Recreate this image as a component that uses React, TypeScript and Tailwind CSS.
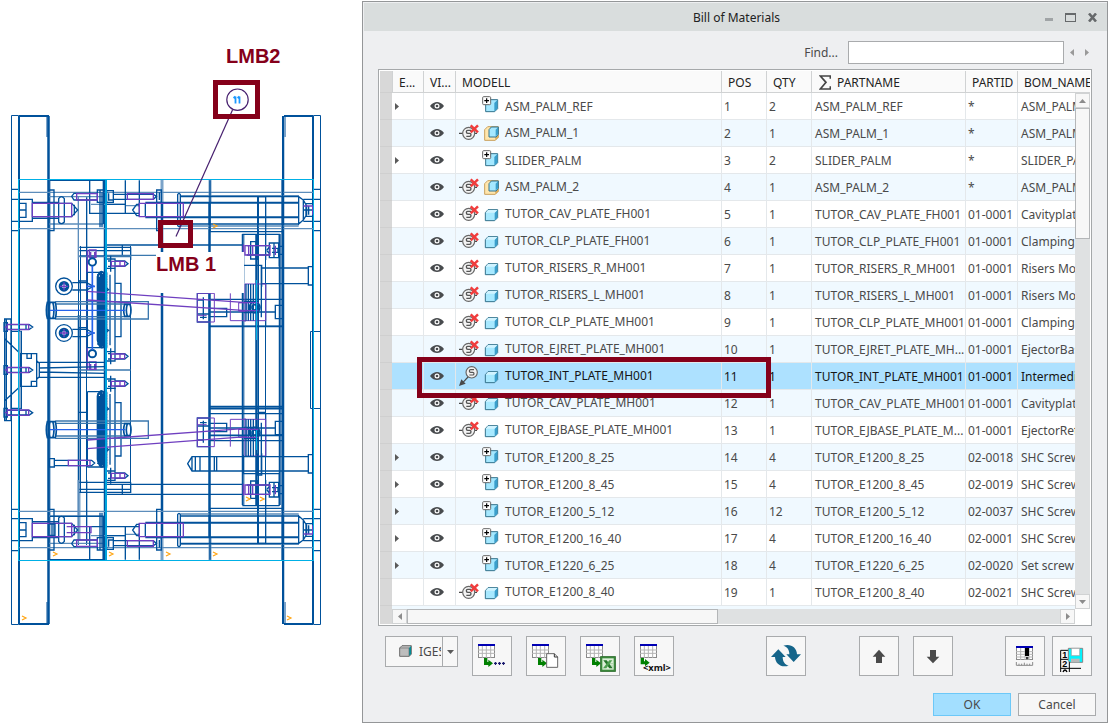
import type { ReactNode } from "react";

type Kind = "group" | "asm" | "part" | "active";
type Row = { kind: Kind; model: string; pos: number; qty: number; part: string; id: string; bom: string };

const rows: Row[] = [
  { kind: "group", model: "ASM_PALM_REF", pos: 1, qty: 2, part: "ASM_PALM_REF", id: "*", bom: "ASM_PALM_REF" },
  { kind: "asm", model: "ASM_PALM_1", pos: 2, qty: 1, part: "ASM_PALM_1", id: "*", bom: "ASM_PALM_1" },
  { kind: "group", model: "SLIDER_PALM", pos: 3, qty: 2, part: "SLIDER_PALM", id: "*", bom: "SLIDER_PALM" },
  { kind: "asm", model: "ASM_PALM_2", pos: 4, qty: 1, part: "ASM_PALM_2", id: "*", bom: "ASM_PALM_2" },
  { kind: "part", model: "TUTOR_CAV_PLATE_FH001", pos: 5, qty: 1, part: "TUTOR_CAV_PLATE_FH001", id: "01-0001", bom: "Cavityplate" },
  { kind: "part", model: "TUTOR_CLP_PLATE_FH001", pos: 6, qty: 1, part: "TUTOR_CLP_PLATE_FH001", id: "01-0001", bom: "Clampingplate" },
  { kind: "part", model: "TUTOR_RISERS_R_MH001", pos: 7, qty: 1, part: "TUTOR_RISERS_R_MH001", id: "01-0001", bom: "Risers Moving" },
  { kind: "part", model: "TUTOR_RISERS_L_MH001", pos: 8, qty: 1, part: "TUTOR_RISERS_L_MH001", id: "01-0001", bom: "Risers Moving" },
  { kind: "part", model: "TUTOR_CLP_PLATE_MH001", pos: 9, qty: 1, part: "TUTOR_CLP_PLATE_MH001", id: "01-0001", bom: "Clampingplate" },
  { kind: "part", model: "TUTOR_EJRET_PLATE_MH001", pos: 10, qty: 1, part: "TUTOR_EJRET_PLATE_MH...", id: "01-0001", bom: "EjectorBase" },
  { kind: "active", model: "TUTOR_INT_PLATE_MH001", pos: 11, qty: 1, part: "TUTOR_INT_PLATE_MH001", id: "01-0001", bom: "Intermediate" },
  { kind: "part", model: "TUTOR_CAV_PLATE_MH001", pos: 12, qty: 1, part: "TUTOR_CAV_PLATE_MH001", id: "01-0001", bom: "Cavityplate" },
  { kind: "part", model: "TUTOR_EJBASE_PLATE_MH001", pos: 13, qty: 1, part: "TUTOR_EJBASE_PLATE_M...", id: "01-0001", bom: "EjectorRet" },
  { kind: "group", model: "TUTOR_E1200_8_25", pos: 14, qty: 4, part: "TUTOR_E1200_8_25", id: "02-0018", bom: "SHC Screw" },
  { kind: "group", model: "TUTOR_E1200_8_45", pos: 15, qty: 4, part: "TUTOR_E1200_8_45", id: "02-0019", bom: "SHC Screw" },
  { kind: "group", model: "TUTOR_E1200_5_12", pos: 16, qty: 12, part: "TUTOR_E1200_5_12", id: "02-0037", bom: "SHC Screw" },
  { kind: "group", model: "TUTOR_E1200_16_40", pos: 17, qty: 4, part: "TUTOR_E1200_16_40", id: "02-0001", bom: "SHC Screw" },
  { kind: "group", model: "TUTOR_E1220_6_25", pos: 18, qty: 4, part: "TUTOR_E1220_6_25", id: "02-0020", bom: "Set screw" },
  { kind: "part", model: "TUTOR_E1200_8_40", pos: 19, qty: 1, part: "TUTOR_E1200_8_40", id: "02-0021", bom: "SHC Screw" },
];

function EyeIcon() {
  return (
    <svg viewBox="0 0 42 24" className="block h-2 w-3.5" aria-hidden="true">
      <path d="M0 12C7 3 14 0 21 0s14 3 21 12c-7 9-14 12-21 12S7 21 0 12Z" fill="#484b4e" />
      <circle cx="21" cy="12" r="7.5" fill="#fff" />
      <circle cx="21" cy="12" r="4" fill="#484b4e" />
    </svg>
  );
}

function BalloonIcon({ active }: { active: boolean }) {
  return (
    <svg viewBox="0 0 60 60" className="block size-5" aria-hidden="true">
      {active ? (
        <>
          <path d="M30 30L12 49" stroke="#4a4a4a" strokeWidth="3.5" />
          <path d="M0 60L7 40L20 53Z" fill="#4a4a4a" />
          <circle cx="38" cy="19" r="17" fill="#f2f2f2" stroke="#666" strokeWidth="3.5" />
          <path d="M45 11H35q-4 0-4 4t4 4h6q4 0 4 4t-4 4H31" fill="none" stroke="#555" strokeWidth="3.5" />
        </>
      ) : (
        <>
          <path d="M0 31H12M46 31H54" stroke="#4a4a4a" strokeWidth="3.5" />
          <circle cx="29" cy="31" r="18" fill="#f4f4f4" stroke="#686868" strokeWidth="3.5" />
          <path d="M36 22H26q-4 0-4 4.500t4 4.500h6q4 0 4 4.500t-4 4.500H22" fill="none" stroke="#555" strokeWidth="4" />
          <path d="M35 7L57 28M57 7L35 28" stroke="#f03c3c" strokeWidth="7.500" />
        </>
      )}
    </svg>
  );
}

function ModelIcon({ kind }: { kind: Kind }) {
  if (kind === "group")
    return (
      <svg viewBox="0 0 51 51" className="block size-[17px]" aria-hidden="true">
        <path d="M11 21L19 11H47V38L38 47H11Z" fill="#a5e8ff" stroke="#34728c" strokeWidth="3" />
        <path d="M37 21L46 12V38L37 46Z" fill="#3a9fcc" />
        <rect x="2" y="2" width="24" height="24" rx="3" fill="#fff" stroke="#666" strokeWidth="3" />
        <path d="M7 14H21M14 7V21" stroke="#000" strokeWidth="3.5" />
      </svg>
    );
  if (kind === "asm")
    return (
      <svg viewBox="0 0 45 45" className="block size-[15px]" aria-hidden="true">
        <path d="M2 11L11 2H43V34L34 43H2Z" fill="#ffe6ad" stroke="#c9a15c" strokeWidth="3" />
        <path d="M34 34L43 25V34L34 43Z" fill="#d9ab5c" />
        <path d="M15 11L22 3H43V25L36 33H15Z" fill="#a5e8ff" stroke="#34728c" strokeWidth="3" />
        <path d="M35 11L42 4V25L35 31Z" fill="#3a9fcc" />
      </svg>
    );
  return (
    <svg viewBox="0 0 45 45" className="block size-[15px]" aria-hidden="true">
      <path d="M4 17L12 8H41V32L32 41H4Z" fill="#a8e9ff" stroke="#34728c" strokeWidth="3" />
      <path d="M32 17L40 9V32L32 40Z" fill="#3a9fcc" />
      <path d="M5 17L12 9H40L32 17Z" fill="#d0f3ff" />
    </svg>
  );
}

function Triangle({ dir, className }: { dir: "left" | "right" | "up" | "down"; className: string }) {
  const d = { left: "M10 0V10L0 5Z", right: "M0 0V10L10 5Z", up: "M0 10H10L5 0Z", down: "M0 0H10L5 10Z" }[dir];
  return (
    <svg viewBox="0 0 10 10" preserveAspectRatio="none" className={className} aria-hidden="true">
      <path d={d} fill="currentColor" />
    </svg>
  );
}

const screws: [number, number][] = [[320, 71], [320, 349], [320, 431], [320, 707]];
const marks: [number, number][] = [[214, 226], [247, 499], [261, 499], [54, 554], [110, 554], [167, 554], [214, 554], [23, 618], [288, 618]];

/* Half of the mould near one clamp edge, in thirds of a unit. */
function UpperFixings() {
  return (
    <g>
      <g stroke="#5c8dbb">
        <path d="M56 457H940M56 566H940M148 470H310M148 552H310M541 467H896M541 558H896" />
        <path d="M235 470V660M273 493H376M376 497H420" />
      </g>
      <path d="M33 448H56M33 478H56M33 544H56M33 572H56M941 448H962M941 478H962M941 544H962M941 572H962" />
      <path d="M58 478H97V544H58ZM58 490H78V532H58M58 510H78" strokeWidth="4" />
      <path d="M97 490H215L233 510L215 530H97M97 487H176M97 535H176M223 494V526" />
      <path d="M148 450H162V572H148M176 476Q184 464 193 476V546Q184 556 176 546Z" strokeWidth="4" />
      <path d="M260 472V660M269 421V520H376M376 421V520M418 421V500M418 520H376M320 493H376" />
      <path d="M215 469L222 460H292V480H222ZM292 450H312V487H292ZM300 450V562M306 457V562M320 452H340V487H320ZM326 460V480H340M340 463H460L470 469L460 478H340M470 450H484V487H470ZM478 457V480" strokeWidth="4" />
      <path d="M398 510L410 493H418V527H410ZM418 490V530M436 490V530" />
      <path d="M436 488H896M436 532H896" strokeWidth="6" />
      <path d="M533 464Q537 456 541 464V556Q537 564 533 556ZM541 470H896M541 552H896M470 487V572H484" />
      <path d="M896 470V552L910 540V480ZM910 480L920 498V524L910 540M910 478H940V544H910M918 491H940V529H918ZM926 498V524M912 510H940" strokeWidth="4" />
      <path d="M150 421H310V552M630 421V575H848V421M773 660V470H797V660" strokeWidth="4" />
      <g stroke="#6f3fc0" strokeWidth="4">
        <path d="M97 490H215V530H97ZM230 461H292V480H230ZM382 461H460V478H382ZM418 490H550V530H418ZM910 498H938V524" />
      </g>
    </g>
  );
}

/* Ejector screws at the right-hand plate stack. */
function StackScrews({ y }: { y: number }) {
  return (
    <g transform={`translate(0 ${y})`} strokeWidth="4">
      <path d="M727 -48H838V48M752 -26H768V26H752ZM740 -14H808V14H740M808 -22H836V22H808ZM822 -22V22M836 -12H848V12H836M800 0L808 -10M800 0L808 10M816 -6H834V6H816" />
      <path d="M730 -18V18M735 -14H810V14H735ZM746 -14V14M758 -14V14M826 -14V14" stroke="#6f3fc0" />
    </g>
  );
}

function GuideBush({ y }: { y: number }) {
  return (
    <g transform={`translate(0 ${y})`}>
      <path d="M166 -19H392M166 19H392M392 -26H445V26H345V-26ZM166 -26H345M166 26H345" stroke="#3b78ae" />
      <path d="M142 -24Q136 0 142 24H166Q172 0 166 -24ZM150 -26Q142 0 150 26M158 -26Q166 0 158 26M374 -18Q368 0 374 18H390Q396 0 390 -18ZM382 -18Q376 0 382 18" strokeWidth="5" />
      <path d="M150 0H376" stroke="#2563eb" />
    </g>
  );
}

function CavityInsert({ y }: { y: number }) {
  return (
    <g transform={`translate(0 ${y})`}>
      <path d="M262 -113H320M262 113H320V-113M262 -113V113M345 -80H363V80H345ZM345 -124V124M330 -106V106" strokeWidth="4" />
      <path d="M293 -100Q302 -125 313 -108V108Q300 122 293 90ZM303 -112V112M298 -100V100M308 -108V108" strokeWidth="6" />
      <path d="M296 -108V108M317 -110V110" strokeDasharray="4 4" strokeWidth="9" />
      <path d="M315 -70L326 -61L315 -54M315 54L326 61L315 70" strokeWidth="4" />
    </g>
  );
}

function AnglePinHead({ y, flip }: { y: number; flip: number }) {
  return (
    <g transform={`translate(0 ${y}) scale(1 ${flip})`}>
      <path d="M592 -42H628V44H592ZM610 -30V36M592 -22H610M592 20H628M600 30H620M628 -24H848M628 3H680V28H628M628 57H848M628 14H826M826 -6H848V34H826ZM797 -70V57" strokeWidth="4" />
      <path d="M592 44V-42H643V44ZM691 -42V40H797V-70H735V44M716 -14H740V12H716ZM592 24H620" stroke="#6f3fc0" strokeWidth="3" />
      <path d="M738 -70V40M745 -70V40M752 -70V40M760 -70V40M775 -60V40M784 -126V30M732 -18H775M732 16H775" strokeWidth="4" />
      <circle cx="764" cy="0" r="16" strokeWidth="5" />
      <circle cx="764" cy="0" r="8" strokeWidth="5" />
      <path d="M716 -14H775M716 10H775" stroke="#6f3fc0" />
    </g>
  );
}

function MouldDrawing() {
  return (
    <svg viewBox="0 0 362 640" className="block w-full" role="img" aria-label="Mould assembly with balloon 11">
      <g fill="none" stroke="#00519b">
        {/* plates and clamp frames */}
        <g stroke="#7ba3c9" strokeWidth="3">
          <path d="M47.500 116V137M47.500 602V624M284.500 116V137M284.500 602V624M162 180V202M162 538V560M210 180V202M210 538V560M79 315V540" />
        </g>
        <path d="M49.500 180V560M105 180V560M280 234V505M282 180V560M243.500 234V505" stroke="#5c8dbb" strokeWidth="2" />
        <path d="M11.500 115.500H18.500V624.500H11.500ZM313.500 115.500H320.500V624.500H313.500ZM310.500 331.500H320.500M310.500 331.500V408.500H320.500" />
        <path d="M19 116H49M19 624H49M284 116H313M284 624H313M19 116V624M313 116V624M283 116V624" strokeWidth="2" />
        <path d="M48.500 116V624M162 202V538M209.500 202V538M256.500 234V505" strokeWidth="2.500" />
        <path d="M242.500 234V505M104.500 180V560M279.500 234V505M283.500 137V602" strokeWidth="1.500" />
        <path d="M78.500 200V545M86.500 198V545M265.500 196V543M258.500 196V543M130.500 246V492M80.500 246V492" />

        <g transform="translate(0 40) scale(.33333)" strokeWidth="4">
          <UpperFixings />
          <StackScrews y={631} />
          <path d="M320 615H727M238 622H392M238 632H392M238 648H392M367 615V648M392 622V660" />
        </g>

        <g transform="translate(0 240) scale(.33333)" strokeWidth="4">
          <path d="M320 46H728M238 50H392M238 390H392" stroke="#3b78ae" />
          <path d="M785 84H925M785 131H925M732 76H785V140M925 80H940V135H925ZM730 84V131" strokeWidth="4" />
          <path d="M262 30V390M268 30H288V52H268ZM268 366H288V388H268ZM272 36V50M284 36V50M272 372V388M284 372V388" stroke="#6f3fc0" strokeWidth="4" />
          <CavityInsert y={210} />
          <CavityInsert y={568} />
          <GuideBush y={211} />
          <GuideBush y={569} />
          {[139, 279].map((y) => (
            <g key={y}>
              <circle cx="192" cy={y} r="25" strokeWidth="4" />
              <circle cx="192" cy={y} r="11" strokeWidth="10" />
              <path d={`M180 ${y}H204M192 ${y - 12}V${y + 12}`} stroke="#6f3fc0" />
              <path d={`M217 ${y - 11}H260L280 ${y}L260 ${y + 11}H217M236 ${y - 19}V${y + 19}M260 ${y - 16}H236`} strokeWidth="4" />
            </g>
          ))}
          {[66, 341].map((y) => (
            <circle key={y} cx="277" cy={y} r="11" strokeWidth="6" />
          ))}
          <path d="M277 78V330M260 139H285M260 279H285" stroke="#2563eb" strokeWidth="5" />
          {screws.map(([x, y]) => (
            <g key={y} transform={`translate(${x} ${y})`} strokeWidth="4">
              <path d="M0 -14H25V14H0M4 -8H12V8H4M12 -24V24M25 -8H54L64 0L54 8H25" />
              <path d="M14 -7H54V7H14ZM40 -7V7" stroke="#6f3fc0" />
            </g>
          ))}
          {/* locating ring and sprue bush */}
          <path d="M14 237H33V542H14ZM19 237V542M33 274H64V505H33M14 296L62 342M14 482L62 438" strokeWidth="4" />
          <path d="M59 274V505" stroke="#7ba3c9" strokeWidth="6" />
          <path d="M62 341H110V439H62ZM81 341V355H94V341M94 439V424H108M110 362L118 370V410L110 418M118 367H315M118 412H315M118 384L315 380M118 396L315 400" strokeWidth="4" />
          {[261, 390, 518].map((y) => (
            <g key={y} strokeWidth="4">
              <path d={`M12 ${y - 13}H22V${y + 13}H12ZM22 ${y - 7}H88L98 ${y}L88 ${y + 7}H22M78 ${y - 7}V${y + 7}`} />
              <path d={`M22 ${y - 8}H86V${y + 8}H22ZM14 ${y}H22`} stroke="#6f3fc0" />
            </g>
          ))}
          <AnglePinHead y={202} flip={1} />
          <AnglePinHead y={578} flip={-1} />
          <path d="M262 154L740 188M262 180L740 212M262 600L740 565M262 626L740 590" stroke="#6f3fc0" />
          <path d="M630 500H848M630 259H848M628 506H848M630 586H848" strokeWidth="5" />
          <path d="M235 517H260M775 517H797" />
        </g>

        <g transform="translate(0 430) scale(.33333)" strokeWidth="4">
          <g transform="translate(0 810) scale(1 -1)">
            <UpperFixings />
          </g>
          <StackScrews y={179} />
          <path d="M727 227H838M320 163H727M320 193H727M238 157H392M238 178H392M238 187H392V157M367 163V193" strokeWidth="4" />
          <path d="M563 101L576 80H600V123H576ZM576 80V123M586 80V123M600 80H925M600 123H925M643 80V123M650 80V123M925 74H940V129H925ZM773 70V135H785V70M730 74V131" strokeWidth="4" />
          <path d="M148 86H163V111H148ZM163 91H275L284 99L275 107H163" strokeWidth="4" />
          <path d="M205 91H270V107H205ZM200 290H273V308H200" stroke="#6f3fc0" strokeWidth="4" />
          <path d="M150 259H310V388M148 282H165V316H148M156 282V316" strokeWidth="4" />
        </g>

        <rect x="156" y="252" width="88" height="41" fill="#fff" stroke="none" />
        <path d="M18 179.500H314M18 560.500H314M18.500 180V560M313.500 180V560" stroke="#00b0e6" />
        <path d="M106 180V560" stroke="#00a4dd" strokeWidth="2" />
        <path d="M256.500 280V340M256.500 430V450" stroke="#00b0e6" />
        <g stroke="#ffa514" strokeWidth="1.200">
          {marks.map(([x, y]) => (
            <path key={`${x}-${y}`} d={`M${x - 1} ${y - 2}L${x + 3} ${y}L${x - 1} ${y + 2}`} />
          ))}
        </g>
      </g>

      <g fill="none">
        <path d="M232.500 110L176 236.500" stroke="#47206f" strokeWidth="1.200" />
        <circle cx="237.500" cy="99.700" r="10.700" stroke="#47206f" strokeWidth="1.200" />
        <path d="M235.500 96.500V103.500M239.500 96.500V103.500M233.500 98L235.500 96.500M237.500 98L239.500 96.500" stroke="#1a98ff" strokeWidth="1.800" />
        <rect x="215.500" y="82.500" width="42" height="34" stroke="#85001a" strokeWidth="5" />
        <rect x="160.500" y="222.500" width="30" height="23" stroke="#85001a" strokeWidth="5" />
      </g>
      <g fill="#85001a" className="font-['Liberation_Sans',sans-serif] text-[20px] font-bold">
        <text x="226" y="63">LMB2</text>
        <text x="156" y="271">LMB 1</text>
      </g>
    </svg>
  );
}

function ToolButton({ label, children, className = "" }: { label: string; children: ReactNode; className?: string }) {
  return (
    <button type="button" aria-label={label} className={`size-10 shrink-0 border border-[#a9abad] bg-[#f7f7f7] ${className}`}>
      <svg viewBox="3 3 114 114" className="block size-full" aria-hidden="true">
        {children}
      </svg>
    </button>
  );
}

function Sheet() {
  return (
    <g>
      <rect x="19.500" y="25.500" width="48" height="39" fill="#fff" stroke="#8a8a8a" strokeWidth="3" />
      <path d="M18 42H69M18 52H69M31 30V66M43 30V66M56 30V66" stroke="#b4b4b4" strokeWidth="3" />
      <path d="M18 24H69V30H18Z" fill="#0000b4" />
    </g>
  );
}

function ExportArrow() {
  return <path d="M36 66H46V78H49V71L63 82L49 93V87H36Z" fill="#008000" />;
}

const smallButton = "flex items-center justify-center border border-[#d0d2d3] bg-[#f7f7f7] text-[#8c8c8c]";
const th = "overflow-hidden border-b border-l border-[#d0d2d3] p-0 pt-0.5 pl-1.5 text-left font-normal whitespace-nowrap";
const td = "overflow-hidden border-b border-l border-[#e4e8eb] p-0 whitespace-nowrap";

function BomTable() {
  return (
    <div className="mx-[15px] mt-[5px] border border-[#a5a8aa] bg-white p-px">
      <div className="relative h-[538px] overflow-hidden">
        <table className="w-full table-fixed border-separate border-spacing-0 text-[12px] leading-4 text-[#4a4a4a]">
          <colgroup>
            <col className="w-3" />
            <col className="w-[31px]" />
            <col className="w-8" />
            <col className="w-[266px]" />
            <col className="w-[45px]" />
            <col className="w-[45px]" />
            <col className="w-[154px]" />
            <col className="w-[52px]" />
            <col />
          </colgroup>
          <thead>
            <tr className="h-[22px] bg-[#fafafa] text-[#222]">
              <th className="border-b border-[#cfcfcf] bg-[#d8d8d8] p-0" aria-label="Row" />
              <th className={th}>E...</th>
              <th className={th}>VI...</th>
              <th className={th}>MODELL</th>
              <th className={th}>POS</th>
              <th className={th}>QTY</th>
              <th className={th}>
                <span className="flex items-center gap-1.5">
                  <svg viewBox="0 0 36 45" className="ml-px h-[15px] w-3" aria-hidden="true">
                    <path d="M34 11V3H4L21 22L4 42H34V34" fill="none" stroke="#444" strokeWidth="5" />
                  </svg>
                  PARTNAME
                </span>
              </th>
              <th className={th}>PARTID</th>
              <th className={th}>BOM_NAME</th>
            </tr>
          </thead>
          <tbody>
            {rows.map((r, i) => (
              <tr
                key={r.pos}
                className={`h-[27px] ${r.kind === "active" ? "bg-[#ade1ff] text-[#151515]" : i % 2 ? "bg-[#f0f9ff]" : "bg-white"}`}
              >
                <td className="border-b border-[#cfcfcf] bg-[#d8d8d8] p-0" />
                <td className="border-b border-[#e4e8eb] p-0 pl-[3px]">
                  {r.kind === "group" && (
                    <button type="button" aria-label={`Expand ${r.model}`} className="block text-[#5a5a5a]">
                      <Triangle dir="right" className="h-[7px] w-1" />
                    </button>
                  )}
                </td>
                <td className="relative border-b border-l border-[#e4e8eb] p-0 pl-1.5">
                  <EyeIcon />
                  {r.kind === "active" && (
                    <span className="pointer-events-none absolute -top-1.5 -left-[7px] z-10 h-[41px] w-[354px] border-[5px] border-[#85001a]" />
                  )}
                </td>
                <td className={td}>
                  <span className="flex items-center">
                    <span className="w-[25px] pl-[3px]">{r.kind !== "group" && <BalloonIcon active={r.kind === "active"} />}</span>
                    <span className="flex w-6 pl-[3px]">
                      <span className={r.kind === "group" ? "-mt-[3px] -ml-0.5" : ""}>
                        <ModelIcon kind={r.kind} />
                      </span>
                    </span>
                    <span className={r.kind === "group" ? "pt-0.5" : ""}>{r.model}</span>
                  </span>
                </td>
                <td className={`${td} pt-0.5 pl-0.5`}>{r.pos}</td>
                <td className={`${td} pt-0.5 pl-0.5`}>{r.qty}</td>
                <td className={`${td} pt-0.5 pl-[3px]`}>{r.part}</td>
                <td className={`${td} pt-0.5 pl-0.5`}>{r.id}</td>
                <td className={`${td} pt-0.5 pl-[3px]`}>{r.bom}</td>
              </tr>
            ))}
            <tr className="h-[27px] bg-[#f0f9ff]">
              <td className="bg-[#d8d8d8] p-0" />
              <td colSpan={8} />
            </tr>
          </tbody>
        </table>
        <div className="absolute top-[22px] right-0 bottom-0 flex w-[15px] flex-col bg-[#dfe1e2]">
          <button type="button" aria-label="Scroll up" className={`${smallButton} h-[15px]`}>
            <Triangle dir="up" className="h-1 w-[7px]" />
          </button>
          <div className="h-[131px] border border-[#b4b6b8] bg-[#f7f7f7]" />
          <button type="button" aria-label="Scroll down" className={`${smallButton} mt-auto h-[15px]`}>
            <Triangle dir="down" className="h-1 w-[7px]" />
          </button>
        </div>
      </div>
      <div className="flex h-[15px] pr-[15px]">
        <div className="w-3 bg-[#d8d8d8]" />
        <div className="flex flex-1 bg-[#dfe1e2]">
          <button type="button" aria-label="Scroll left" className={`${smallButton} w-[15px]`}>
            <Triangle dir="left" className="h-[7px] w-1" />
          </button>
          <div className="w-[311px] border border-[#b4b6b8] bg-[#f7f7f7]" />
          <button type="button" aria-label="Scroll right" className={`${smallButton} ml-auto w-[15px]`}>
            <Triangle dir="right" className="h-[7px] w-1" />
          </button>
        </div>
      </div>
    </div>
  );
}

function Toolbar() {
  return (
    <div className="mx-[15px] mt-2.5 flex items-start pl-[7px]">
      <label className="relative mr-3.5 block">
        <span className="sr-only">Export format</span>
        <select className="block h-[31px] w-[73px] appearance-none border border-[#a9abad] bg-[#f7f7f7] pr-4 pl-[33px] text-[12px] text-[#4a4a4a]">
          <option>IGES</option>
          <option>STEP</option>
        </select>
        <svg viewBox="0 0 39 36" className="pointer-events-none absolute top-[9px] left-3.5 h-3 w-[13px]" aria-hidden="true">
          <path d="M2 9L9 2H37V28L30 34H2Z" fill="#bdbdbd" stroke="#6e6e6e" strokeWidth="3" />
          <path d="M30 9L36 3V28L30 33Z" fill="#008c96" />
          <path d="M2 9H30V34" fill="none" stroke="#6e6e6e" strokeWidth="2" />
        </svg>
        <span className="pointer-events-none absolute inset-y-0 right-0 flex w-4 items-center justify-center border-l border-[#a9abad] text-[#5a5a5a]">
          <Triangle dir="down" className="h-1 w-[7px]" />
        </span>
      </label>
      <div className="flex gap-3.5">
        <ToolButton label="Export table">
          <Sheet />
          <ExportArrow />
          <path d="M66 82H75M70.500 78V87M78 82H87M82.500 78V87M90 82H99M94.500 78V87" stroke="#1a1a6e" strokeWidth="3.500" />
        </ToolButton>
        <ToolButton label="Export to text file">
          <Sheet />
          <ExportArrow />
          <path d="M62 53H85L95 63V94H62Z" fill="#fff" stroke="#666" strokeWidth="3" />
          <path d="M85 53V63H95" fill="none" stroke="#333" strokeWidth="3" />
        </ToolButton>
        <ToolButton label="Export to Excel">
          <Sheet />
          <ExportArrow />
          <rect x="62" y="62" width="44" height="44" fill="#3e8e3e" stroke="#2f6f2f" strokeWidth="3" />
          <rect x="67" y="67" width="34" height="34" fill="#dcefd8" />
          <path d="M70 73H80L98 97H88Z" fill="#24742a" />
          <path d="M97 73H88L69 97H79Z" fill="#4ea050" />
          <path d="M90 83H99M92 90H99" stroke="#8cc48c" strokeWidth="2" />
        </ToolButton>
        <ToolButton label="Export to XML">
          <Sheet />
          <path d="M20 66H30V76H33V69L47 80L33 91V85H20Z" fill="#008000" />
          <text x="27" y="106" fill="#111" fontSize="28" className="font-['Noto_Sans',sans-serif] font-bold">
            &lt;xml&gt;
          </text>
        </ToolButton>
      </div>
      <div className="ml-auto flex">
        <ToolButton label="Refresh">
          <path d="M15 63L37 40L59 63H50C50 76 56 86 68 89C46 96 28 84 27 63Z" fill="#15658a" />
          <path d="M15 63L37 40L59 63H50C50 76 56 86 68 89C46 96 28 84 27 63Z" fill="#15658a" transform="rotate(180 60 59)" />
        </ToolButton>
        <ToolButton label="Move up" className="ml-[53px]">
          <path d="M60 41L79 62H69V81H51V62H41Z" fill="#4a4a4a" />
        </ToolButton>
        <ToolButton label="Move down" className="ml-3.5">
          <path d="M60 82L79 62H69V42H51V62H41Z" fill="#4a4a4a" />
        </ToolButton>
        <ToolButton label="Column widths" className="ml-[52px]">
          <rect x="34.500" y="31.500" width="48" height="39" fill="#fff" stroke="#8a8a8a" strokeWidth="3" />
          <path d="M33 47H84M33 55H84M33 63H84M47 36V72M60 36V72M72 36V72" stroke="#b4b4b4" strokeWidth="3" />
          <path d="M33 30H84V36H33Z" fill="#0000b4" />
          <path d="M60 36H72V60H60ZM63 64H70V68H63Z" fill="#000" />
          <path d="M34 78V88H83V78M42 83V88M50 83V88M58 80V88M66 83V88M74 83V88" fill="none" stroke="#8a8a8a" strokeWidth="3" />
        </ToolButton>
        <ToolButton label="Save numbering" className="ml-[7px]">
          <path d="M26 108V43H52M26 70H52M26 97H87M52 43V108" fill="none" stroke="#000" strokeWidth="3" />
          <g fill="#000" fontSize="27" className="font-['Liberation_Sans',sans-serif] font-bold">
            <text x="31" y="67">1</text>
            <text x="31" y="94">2</text>
          </g>
          <path d="M33 108Q39 96 45 108" fill="none" stroke="#000" strokeWidth="4" />
          <path d="M49 37H92V79H54L49 74Z" fill="#00f5ff" stroke="#858585" strokeWidth="3" />
          <path d="M58 37H83V59H58Z" fill="#fff" stroke="#999" strokeWidth="2" />
          <path d="M57 68H83V79H57Z" fill="#b9b9b9" />
        </ToolButton>
      </div>
    </div>
  );
}

export default function App() {
  return (
    <div className="flex items-start bg-white font-['Noto_Sans',sans-serif] text-[12px] text-[#4a4a4a]">
      <div className="w-[362px] shrink-0">
        <MouldDrawing />
      </div>
      <main className="mt-px mr-px min-w-0 flex-1 border border-[#949698] bg-[#eeeff1] pb-1.5">
        <header className="mt-px ml-px flex h-7 items-center bg-[#d9dddd] pr-2.5">
          <h1 className="flex-1 pt-0.5 pl-16 text-center text-[12px] leading-4 text-[#222]">Bill of Materials</h1>
          <div className="flex items-center gap-3 text-[#66696b]">
            <button type="button" aria-label="Minimize" className="flex h-3 w-2 items-center">
              <span className="mt-1 h-[3px] w-full bg-[#a0a4a6]" />
            </button>
            <button type="button" aria-label="Maximize" className="h-[9px] w-[11px] border border-t-2 border-[#66696b]" />
            <button type="button" aria-label="Close">
              <svg viewBox="0 0 9 9" className="block size-[9px]" aria-hidden="true">
                <path d="M1 .5L8 8.500M8 .5L1 8.500" stroke="currentColor" strokeWidth="2.600" />
              </svg>
            </button>
          </div>
        </header>
        <form className="mt-2.5 flex items-center justify-end pr-[18px]">
          <label htmlFor="find" className="mr-2.5">
            Find...
          </label>
          <input id="find" type="text" className="h-[23px] w-[216px] border border-[#a9abad] bg-white px-1" />
          <button type="button" aria-label="Find previous" className="ml-1.5 text-[#999]">
            <Triangle dir="left" className="block h-[7px] w-1" />
          </button>
          <button type="button" aria-label="Find next" className="ml-[11px] text-[#999]">
            <Triangle dir="right" className="block h-[7px] w-1" />
          </button>
        </form>
        <BomTable />
        <Toolbar />
        <footer className="mt-[17px] flex justify-end gap-[7px] pr-[11px]">
          <button type="button" className="h-[23px] w-[78px] border border-[#6cc8f8] bg-[#a3dfff]">
            OK
          </button>
          <button type="button" className="h-[23px] w-[78px] border border-[#a9abad] bg-[#f7f7f7]">
            Cancel
          </button>
        </footer>
      </main>
    </div>
  );
}
